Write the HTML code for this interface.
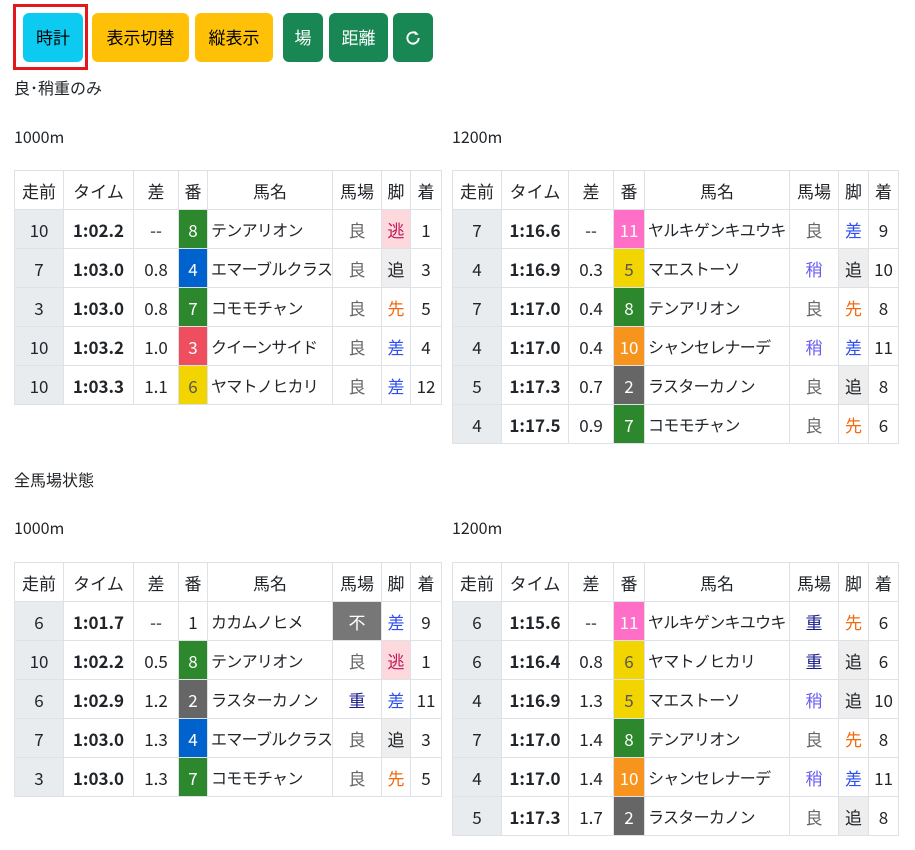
<!DOCTYPE html>
<html><head><meta charset="utf-8"><style>
body{margin:0;width:915px;height:850px;background:#fff;font-family:"Noto Sans CJK JP",sans-serif;color:#212529;font-size:16px;position:relative;overflow:hidden;line-height:1.2}
.btn{position:absolute;top:13px;height:49px;border-radius:6px;display:flex;align-items:center;justify-content:center;font-size:17px}
.y{background:#ffc107;color:#000}.g{background:#198754;color:#fff}
.lbl{position:absolute;left:14px;font-size:16px}
table{position:absolute;border-collapse:collapse;table-layout:fixed}
td,th{border:1px solid #dee2e6;height:38px;padding:0;text-align:center;font-weight:normal;white-space:nowrap;overflow:hidden;vertical-align:middle;line-height:1;font-size:17px}
td.a{background:#e9ecef}
td.t{font-weight:bold}
td.n{text-align:left;padding-left:3px;font-size:16px;letter-spacing:-0.7px}
.c1{background:#fff;color:#212529}.c2{background:#666;color:#fff}.c3{background:#ee4e5e;color:#fff}.c4{background:#0062cc;color:#fff}
.c5,.c6{background:#f2d400;color:#555}.c7,.c8{background:#2d882d;color:#fff}.c10{background:#f7941d;color:#fff}.c11{background:#ff6ec7;color:#fff}
.ry{color:#666}.rs{color:#6a5cf0}.rj{color:#1a1a8c}.rf{background:#777;color:#fff}
.e{background:#fdd9dd;color:#c0185a}.o{background:#eee}.s{color:#2d4ef0}.k{color:#f26a10}
</style></head><body>
<div style="position:absolute;left:13px;top:4px;width:75px;height:66px;border:3px solid #e4171d;box-sizing:border-box"></div>
<div class="btn" style="left:23px;width:60px;background:#0dcaf0;color:#000">時計</div>
<div class="btn y" style="left:92px;width:97px">表示切替</div>
<div class="btn y" style="left:195px;width:78px">縦表示</div>
<div class="btn g" style="left:283px;width:40px">場</div>
<div class="btn g" style="left:329px;width:59px">距離</div>
<div class="btn g" style="left:393px;width:40px"><svg width="18" height="18" viewBox="0 0 16 16"><path d="M13 8a5 5 0 1 1-1.5-3.6" fill="none" stroke="#fff" stroke-width="1.7"/><path d="M9.5 1.5v3.6h3.6z" fill="#fff"/></svg></div>

<div class="lbl" style="top:78px">良･稍重のみ</div>
<div class="lbl" style="top:127px">1000m</div>
<div class="lbl" style="top:127px;left:452px">1200m</div>
<div class="lbl" style="top:470px">全馬場状態</div>
<div class="lbl" style="top:518px">1000m</div>
<div class="lbl" style="top:518px;left:452px">1200m</div>

<table style="left:14px;top:170px;width:427px">
<colgroup><col style="width:49px"><col style="width:70px"><col style="width:45px"><col style="width:29px"><col style="width:125px"><col style="width:49px"><col style="width:29px"><col style="width:31px"></colgroup>
<tr><th>走前</th><th>タイム</th><th>差</th><th>番</th><th>馬名</th><th>馬場</th><th>脚</th><th>着</th></tr>
<tr><td class="a">10</td><td class="t">1:02.2</td><td>--</td><td class="c8">8</td><td class="n">テンアリオン</td><td class="ry">良</td><td class="e">逃</td><td>1</td></tr>
<tr><td class="a">7</td><td class="t">1:03.0</td><td>0.8</td><td class="c4">4</td><td class="n">エマーブルクラス</td><td class="ry">良</td><td class="o">追</td><td>3</td></tr>
<tr><td class="a">3</td><td class="t">1:03.0</td><td>0.8</td><td class="c7">7</td><td class="n">コモモチャン</td><td class="ry">良</td><td class="k">先</td><td>5</td></tr>
<tr><td class="a">10</td><td class="t">1:03.2</td><td>1.0</td><td class="c3">3</td><td class="n">クイーンサイド</td><td class="ry">良</td><td class="s">差</td><td>4</td></tr>
<tr><td class="a">10</td><td class="t">1:03.3</td><td>1.1</td><td class="c6">6</td><td class="n">ヤマトノヒカリ</td><td class="ry">良</td><td class="s">差</td><td>12</td></tr>
</table>

<table style="left:452px;top:170px;width:446px">
<colgroup><col style="width:49px"><col style="width:67px"><col style="width:45px"><col style="width:31px"><col style="width:145px"><col style="width:49px"><col style="width:30px"><col style="width:30px"></colgroup>
<tr><th>走前</th><th>タイム</th><th>差</th><th>番</th><th>馬名</th><th>馬場</th><th>脚</th><th>着</th></tr>
<tr><td class="a">7</td><td class="t">1:16.6</td><td>--</td><td class="c11">11</td><td class="n">ヤルキゲンキユウキ</td><td class="ry">良</td><td class="s">差</td><td>9</td></tr>
<tr><td class="a">4</td><td class="t">1:16.9</td><td>0.3</td><td class="c5">5</td><td class="n">マエストーソ</td><td class="rs">稍</td><td class="o">追</td><td>10</td></tr>
<tr><td class="a">7</td><td class="t">1:17.0</td><td>0.4</td><td class="c8">8</td><td class="n">テンアリオン</td><td class="ry">良</td><td class="k">先</td><td>8</td></tr>
<tr><td class="a">4</td><td class="t">1:17.0</td><td>0.4</td><td class="c10">10</td><td class="n">シャンセレナーデ</td><td class="rs">稍</td><td class="s">差</td><td>11</td></tr>
<tr><td class="a">5</td><td class="t">1:17.3</td><td>0.7</td><td class="c2">2</td><td class="n">ラスターカノン</td><td class="ry">良</td><td class="o">追</td><td>8</td></tr>
<tr><td class="a">4</td><td class="t">1:17.5</td><td>0.9</td><td class="c7">7</td><td class="n">コモモチャン</td><td class="ry">良</td><td class="k">先</td><td>6</td></tr>
</table>

<table style="left:14px;top:562px;width:427px">
<colgroup><col style="width:49px"><col style="width:70px"><col style="width:45px"><col style="width:29px"><col style="width:125px"><col style="width:49px"><col style="width:29px"><col style="width:31px"></colgroup>
<tr><th>走前</th><th>タイム</th><th>差</th><th>番</th><th>馬名</th><th>馬場</th><th>脚</th><th>着</th></tr>
<tr><td class="a">6</td><td class="t">1:01.7</td><td>--</td><td class="c1">1</td><td class="n">カカムノヒメ</td><td class="rf">不</td><td class="s">差</td><td>9</td></tr>
<tr><td class="a">10</td><td class="t">1:02.2</td><td>0.5</td><td class="c8">8</td><td class="n">テンアリオン</td><td class="ry">良</td><td class="e">逃</td><td>1</td></tr>
<tr><td class="a">6</td><td class="t">1:02.9</td><td>1.2</td><td class="c2">2</td><td class="n">ラスターカノン</td><td class="rj">重</td><td class="s">差</td><td>11</td></tr>
<tr><td class="a">7</td><td class="t">1:03.0</td><td>1.3</td><td class="c4">4</td><td class="n">エマーブルクラス</td><td class="ry">良</td><td class="o">追</td><td>3</td></tr>
<tr><td class="a">3</td><td class="t">1:03.0</td><td>1.3</td><td class="c7">7</td><td class="n">コモモチャン</td><td class="ry">良</td><td class="k">先</td><td>5</td></tr>
</table>

<table style="left:452px;top:562px;width:446px">
<colgroup><col style="width:49px"><col style="width:67px"><col style="width:45px"><col style="width:31px"><col style="width:145px"><col style="width:49px"><col style="width:30px"><col style="width:30px"></colgroup>
<tr><th>走前</th><th>タイム</th><th>差</th><th>番</th><th>馬名</th><th>馬場</th><th>脚</th><th>着</th></tr>
<tr><td class="a">6</td><td class="t">1:15.6</td><td>--</td><td class="c11">11</td><td class="n">ヤルキゲンキユウキ</td><td class="rj">重</td><td class="k">先</td><td>6</td></tr>
<tr><td class="a">6</td><td class="t">1:16.4</td><td>0.8</td><td class="c6">6</td><td class="n">ヤマトノヒカリ</td><td class="rj">重</td><td class="o">追</td><td>6</td></tr>
<tr><td class="a">4</td><td class="t">1:16.9</td><td>1.3</td><td class="c5">5</td><td class="n">マエストーソ</td><td class="rs">稍</td><td class="o">追</td><td>10</td></tr>
<tr><td class="a">7</td><td class="t">1:17.0</td><td>1.4</td><td class="c8">8</td><td class="n">テンアリオン</td><td class="ry">良</td><td class="k">先</td><td>8</td></tr>
<tr><td class="a">4</td><td class="t">1:17.0</td><td>1.4</td><td class="c10">10</td><td class="n">シャンセレナーデ</td><td class="rs">稍</td><td class="s">差</td><td>11</td></tr>
<tr><td class="a">5</td><td class="t">1:17.3</td><td>1.7</td><td class="c2">2</td><td class="n">ラスターカノン</td><td class="ry">良</td><td class="o">追</td><td>8</td></tr>
</table>
</body></html>
